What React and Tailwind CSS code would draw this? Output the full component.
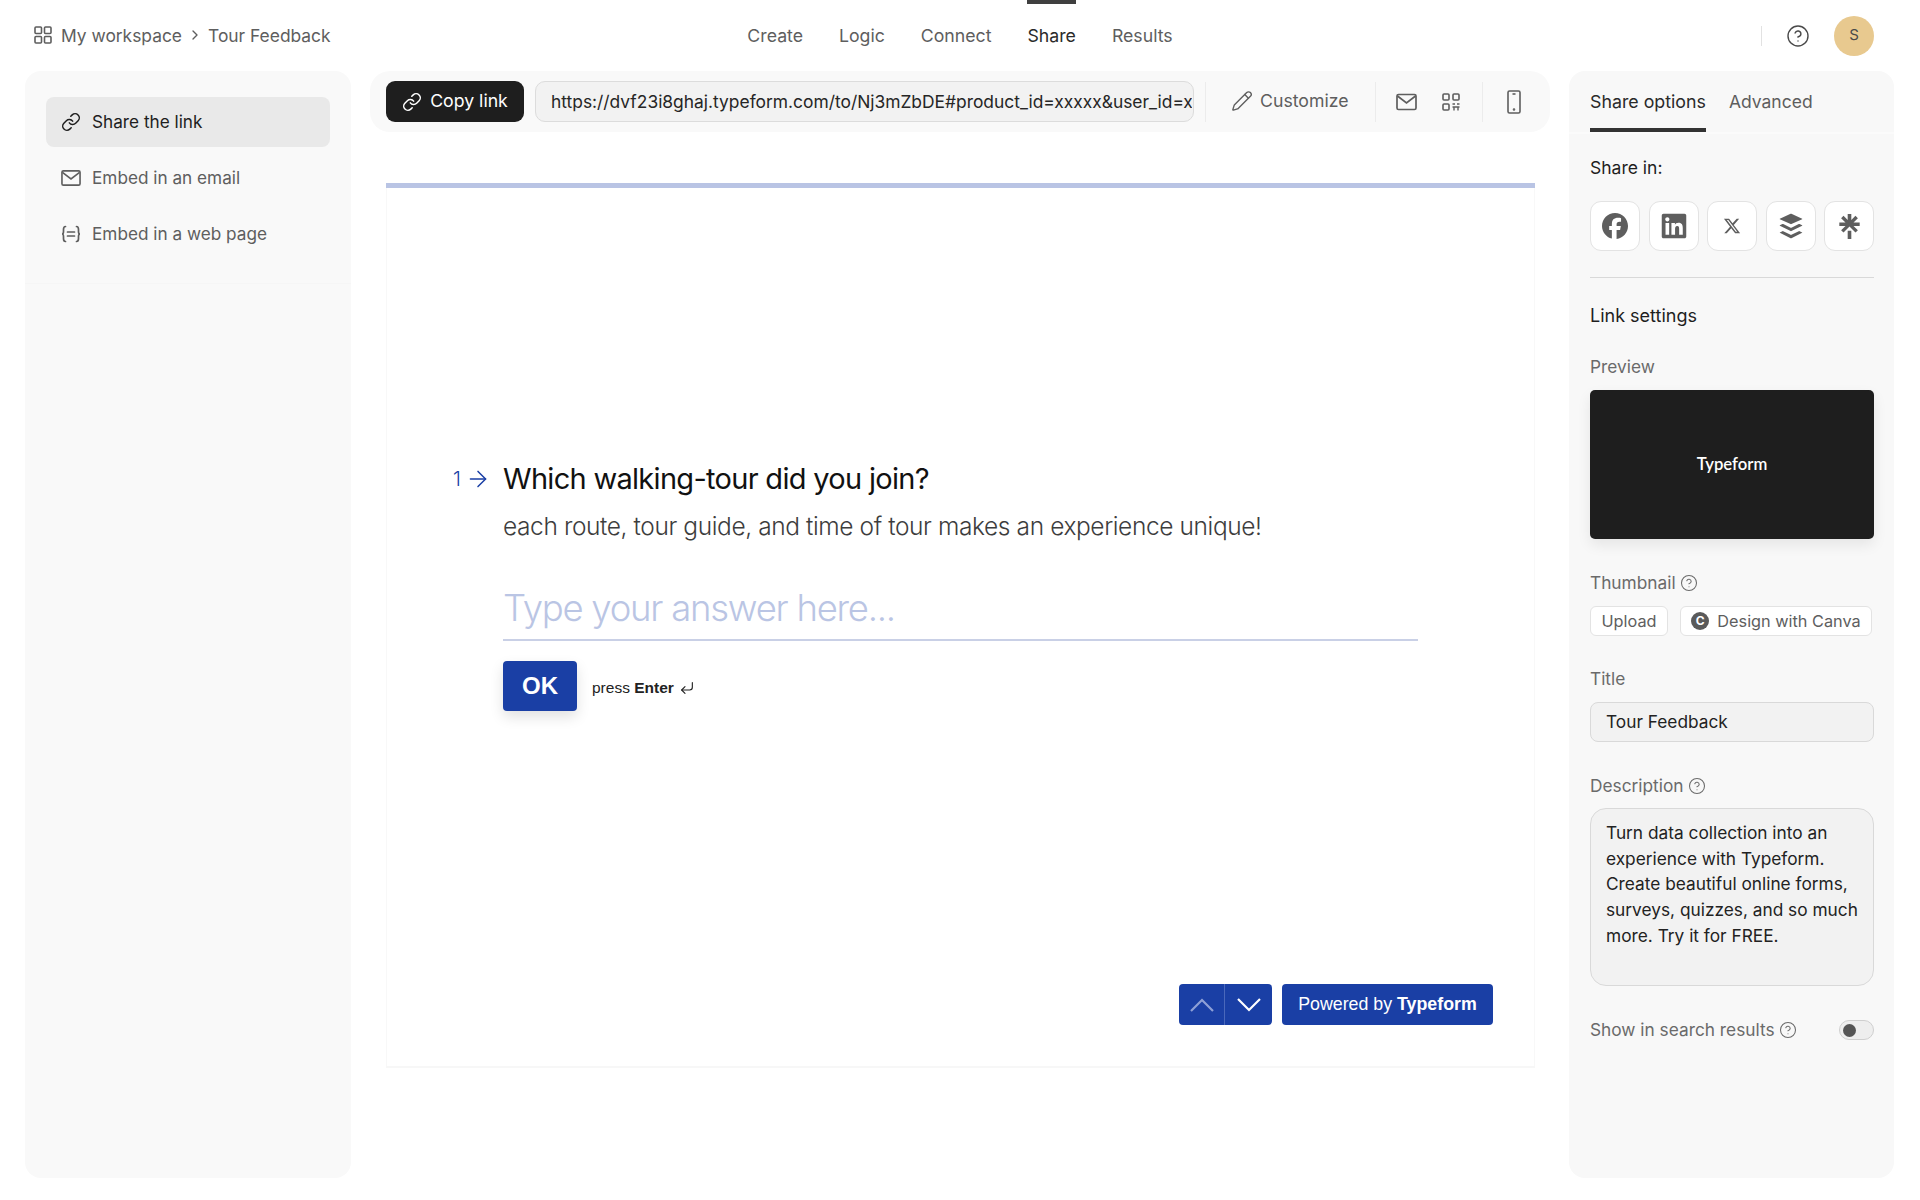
import { ChevronRight, CircleHelp, Link as LinkIcon, Pencil, ArrowRight, CornerDownLeft } from "lucide-react";
import { FaFacebook, FaLinkedin, FaXTwitter, FaBuffer } from "react-icons/fa6";
import { SiLinktree } from "react-icons/si";

const GridIcon = () => (
  <svg width="18" height="18" viewBox="0 0 18 18" fill="none" stroke="#5e5e5e" strokeWidth="1.6">
    <rect x="1" y="1" width="6.5" height="6.5" rx="1" />
    <rect x="10.5" y="1" width="6.5" height="6.5" rx="1" />
    <rect x="1" y="10.5" width="6.5" height="6.5" rx="1" />
    <rect x="10.5" y="10.5" width="6.5" height="6.5" rx="1" />
  </svg>
);

const MailIcon = () => (
  <svg width="21" height="18" viewBox="0 0 21 18" fill="none" stroke="#5e5e5e" strokeWidth="1.7">
    <rect x="1" y="1.5" width="19" height="15" rx="1.5" />
    <path d="M1.5 3l9 7 9-7" />
  </svg>
);

const EmbedIcon = () => (
  <svg width="20" height="18" viewBox="0 0 20 18" fill="none" stroke="#5e5e5e" strokeWidth="1.7" strokeLinecap="round">
    <path d="M4.500 1.500C2.500 1.500 2.500 3 2.500 4.500v2c0 1.500-.5 2.500-1.500 2.500 1 0 1.500 1 1.500 2.500v2c0 1.500 0 3 2 3" />
    <path d="M15.500 1.500c2 0 2 1.500 2 3v2c0 1.500.5 2.500 1.500 2.500-1 0-1.500 1-1.500 2.500v2c0 1.500 0 3-2 3" />
    <path d="M6.500 7h7M6.500 11h7" />
  </svg>
);

const QrIcon = () => (
  <svg width="18" height="18" viewBox="0 0 18 18" fill="none" stroke="#5e5e5e" strokeWidth="1.6">
    <rect x="1" y="1" width="6" height="6" rx="1" />
    <rect x="11" y="1" width="6" height="6" rx="1" />
    <rect x="1" y="11" width="6" height="6" rx="1" />
    <path d="M10.500 11h2.500M15 11h2.500M10.500 14h7M12 14v3.500M16 14.500v3" strokeWidth="1.400" />
  </svg>
);

const PhoneIcon = () => (
  <svg width="14" height="24" viewBox="0 0 14 24" fill="none" stroke="#5e5e5e" strokeWidth="1.6">
    <rect x="1" y="1" width="12" height="22" rx="1.500" />
    <path d="M5.500 4h3" />
    <circle cx="7" cy="19.500" r="0.500" fill="#5e5e5e" />
  </svg>
);

const Chevron = ({ up, className }) => (
  <svg width="24" height="14" viewBox="0 0 24 14" fill="none" stroke="currentColor" strokeWidth="2.200" className={className}>
    <path d={up ? "M1 13L12 2l11 11" : "M1 1l11 11L23 1"} />
  </svg>
);

const MenuItem = ({ icon, label, active }) => (
  <div className={`h-[50px] px-[15px] flex items-center gap-[11px] rounded-lg text-[17.200px] ${active ? "bg-[#e9e9e9] text-[#1e1e1e]" : "text-[#5e5e5e]"}`}>
    <span className="w-5 flex justify-center">{icon}</span>
    <span>{label}</span>
  </div>
);

const ShareButton = ({ children }) => (
  <div className="w-[50px] h-[50px] flex items-center justify-center bg-white border border-[#e3e3e3] rounded-[11px] text-[#5e5e5e]">
    {children}
  </div>
);

const FieldLabel = ({ children, help }) => (
  <div className="h-6 flex items-center gap-[4px] text-[17.300px] text-[#6a6a6a]">
    {children}
    {help && <CircleHelp size={18} strokeWidth={1.4} />}
  </div>
);

const VDivider = () => <div className="w-px h-[40px] bg-[#ececec]" />;

export default function App() {
  const tabs = ["Create", "Logic", "Connect", "Share", "Results"];

  return (
    <div className="w-[1920px] h-[1200px] bg-white overflow-hidden text-[#1e1e1e] [font-family:Inter,sans-serif]">
      {/* Top bar */}
      <header className="h-[71px] grid grid-cols-[1fr_auto_1fr] items-center px-[34px]">
        <div className="flex items-center text-[17.400px] text-[#5e5e5e]">
          <GridIcon />
          <span className="ml-[9px] pt-[2px]">My workspace</span>
          <ChevronRight size={16} className="mx-[5px]" />
          <span className="pt-[2px]">Tour Feedback</span>
        </div>
        <nav className="flex gap-9 h-full text-[17.700px] text-[#5e5e5e]">
          {tabs.map((t) => (
            <div key={t} className={`h-full flex items-center border-t-[4px] pb-[2px] ${t === "Share" ? "border-[#3f3f3f] text-[#2a2a2a]" : "border-transparent"}`}>
              {t}
            </div>
          ))}
        </nav>
        <div className="flex items-center justify-end pr-[12px]">
          <div className="w-px h-5 bg-[#e2e2e2]" />
          <CircleHelp size={24} strokeWidth={1.4} className="ml-[24px] text-[#4a4a4a]" />
          <div className="ml-[24px] w-10 h-10 rounded-full bg-[#e8c98f] flex items-center justify-center text-[15px] text-[#4a4a4a]">S</div>
        </div>
      </header>

      <div className="flex h-[1107px] pl-[25px]">
        {/* Left panel */}
        <aside className="w-[326px] h-full bg-[#f9f9f9] rounded-2xl">
          <div className="h-[213px] pt-[26px] px-[21px] flex flex-col gap-[6px] border-b border-[#f6f6f6]">
            <MenuItem active icon={<LinkIcon size={20} strokeWidth={1.8} />} label="Share the link" />
            <MenuItem icon={<MailIcon />} label="Embed in an email" />
            <MenuItem icon={<EmbedIcon />} label="Embed in a web page" />
          </div>
        </aside>

        {/* Center */}
        <main className="w-[1180px] ml-[19px]">
          <div className="h-[61px] bg-[#f9f9f9] rounded-[20px] flex items-center pl-4">
            <button className="w-[138px] h-[41px] bg-[#1e1e1e] text-white rounded-[9px] flex items-center justify-center gap-[8px] text-[17.700px]">
              <LinkIcon size={20} strokeWidth={1.8} />
              Copy link
            </button>
            <input
              readOnly
              value="https://dvf23i8ghaj.typeform.com/to/Nj3mZbDE#product_id=xxxxx&user_id=xxxxx"
              className="ml-[11px] w-[659px] h-[41px] bg-[#f2f2f2] border border-[#dcdcdc] rounded-[10px] pl-[15px] pr-px text-[17.400px] text-[#262626] outline-none"
            />
            <div className="ml-[11px]"><VDivider /></div>
            <div className="ml-[25px] flex items-center gap-[7px] text-[17.700px] text-[#5e5e5e]">
              <Pencil size={22} strokeWidth={1.5} />
              Customize
            </div>
            <div className="ml-[26px]"><VDivider /></div>
            <div className="ml-[20px]"><MailIcon /></div>
            <div className="ml-[25px]"><QrIcon /></div>
            <div className="ml-[22px]"><VDivider /></div>
            <div className="ml-[24px]"><PhoneIcon /></div>
          </div>

          {/* Form preview */}
          <div className="mt-[51px] ml-4 w-[1149px] h-[885px] bg-white border-x border-b-2 border-x-[#f8f8f8] border-b-[#f7f7f7] flex flex-col">
            <div className="h-[5px] -mx-px bg-[#b9c4e4]" />
            <div className="pt-[273px]">
              <div className="flex items-center h-[36px] pl-[66px]">
                <span className="w-[14px] text-[20px] text-[#1a3fa5] font-light">1</span>
                <ArrowRight size={26} strokeWidth={1.4} className="-ml-[2px] text-[#1a3fa5]" />
                <span className="ml-[12px] text-[29px] tracking-[-0.7px] text-[#111]">Which walking-tour did you join?</span>
              </div>
              <div className="ml-[116px] mt-[12px] text-[24.500px] tracking-[-0.4px] leading-[34px] font-light text-[#3d3d3d]">
                each route, tour guide, and time of tour makes an experience unique!
              </div>
              <div className="ml-[116px] mr-[116px] mt-[39px] h-[59px] border-b-2 border-[#c9d0e6] text-[36.500px] tracking-[-1.250px] leading-[52px] font-light text-[#bac5e4]">
                Type your answer here...
              </div>
              <div className="ml-[116px] mt-5 flex items-center">
                <div className="w-[74px] h-[50px] rounded-[4px] bg-[#1a3fa5] text-white flex items-center justify-center text-[24px] font-bold shadow-[0_6px_14px_rgba(0,0,0,0.12)] [font-family:'Liberation_Sans',sans-serif]">OK</div>
                <div className="ml-[15px] mt-[3px] flex items-center gap-[5px] text-[15.500px] text-[#222] [font-family:'Liberation_Sans',sans-serif]">
                  <span>press <b>Enter</b></span>
                  <CornerDownLeft size={16} strokeWidth={1.7} />
                </div>
              </div>
            </div>
            <div className="mt-auto mb-[41px] mr-[41px] flex justify-end gap-[10px] [font-family:'Liberation_Sans',sans-serif]">
              <div className="h-[41px] flex rounded-[4px] bg-[#1a3fa5] text-white overflow-hidden">
                <div className="w-[46px] flex items-center justify-center border-r border-[#4a68bb]"><Chevron up className="text-[#8ea0d6]" /></div>
                <div className="w-[47px] flex items-center justify-center"><Chevron /></div>
              </div>
              <div className="w-[211px] h-[41px] rounded-[4px] bg-[#1a3fa5] text-white flex items-center justify-center text-[17.800px]">
                <span>Powered by <b>Typeform</b></span>
              </div>
            </div>
          </div>
        </main>

        {/* Right panel */}
        <aside className="w-[325px] ml-[19px] h-full bg-[#f8f8f8] rounded-2xl">
          <div className="h-[63px] px-[21px] flex gap-[23px] border-b-2 border-[#fbfbfb] text-[17.800px]">
            <div className="h-[61px] flex items-center border-b-4 border-[#333] pt-[5px] text-[#2a2a2a]">Share options</div>
            <div className="h-[61px] flex items-center pt-[1px] text-[17.500px] text-[#5e5e5e]">Advanced</div>
          </div>
          <div className="pl-[21px] pr-[20px]">
            <div className="mt-[23px] text-[17.500px] leading-[22px]">Share in:</div>
            <div className="mt-[22px] flex justify-between">
              <ShareButton><FaFacebook size={26} /></ShareButton>
              <ShareButton><FaLinkedin size={28} /></ShareButton>
              <ShareButton><FaXTwitter size={18} /></ShareButton>
              <ShareButton><FaBuffer size={28} /></ShareButton>
              <ShareButton><SiLinktree size={25} /></ShareButton>
            </div>
            <div className="mt-[26px] h-px bg-[#d9d9d9]" />
            <div className="mt-[27px] text-[18px] leading-[22px]">Link settings</div>
            <div className="mt-[28px]"><FieldLabel>Preview</FieldLabel></div>
            <div className="mt-[11px] h-[149px] bg-[#1e1e1e] rounded-[5px] flex items-center justify-center text-white text-[16.700px] font-semibold shadow-[0_6px_14px_rgba(0,0,0,0.08)] [font-family:Lato,sans-serif]">Typeform</div>
            <div className="mt-[32px]"><FieldLabel help>Thumbnail</FieldLabel></div>
            <div className="mt-[11px] flex gap-3 text-[16.300px] text-[#5e5e5e]">
              <div className="w-[78px] h-[30px] bg-white border border-[#e3e3e3] rounded-md flex items-center justify-center">Upload</div>
              <div className="w-[192px] h-[30px] bg-white border border-[#e3e3e3] rounded-md flex items-center justify-center gap-2">
                <span className="w-[18px] h-[18px] rounded-full bg-[#5a5a5a] text-white text-[12px] font-bold flex items-center justify-center">C</span>
                Design with Canva
              </div>
            </div>
            <div className="mt-[31px]"><FieldLabel>Title</FieldLabel></div>
            <div className="mt-[11px] h-[40px] bg-[#f2f2f2] border border-[#d9d9d9] rounded-lg flex items-center px-[15px] text-[17.300px] text-[#222]">Tour Feedback</div>
            <div className="mt-[32px]"><FieldLabel help>Description</FieldLabel></div>
            <div className="mt-[10px] h-[178px] bg-[#f2f2f2] border border-[#d9d9d9] rounded-2xl pl-[15px] pr-[8px] pt-[11px] text-[17.300px] leading-[25.700px] text-[#222]">
              Turn data collection into an experience with Typeform. Create beautiful online forms, surveys, quizzes, and so much more. Try it for FREE.
            </div>
            <div className="mt-[32px] flex items-center justify-between">
              <FieldLabel help>Show in search results</FieldLabel>
              <div className="w-[35px] h-5 rounded-full bg-[#eeeeee] border border-[#cfcfcf] flex items-center pl-[3px]">
                <div className="w-[13px] h-[13px] rounded-full bg-[#555]" />
              </div>
            </div>
          </div>
        </aside>
      </div>
    </div>
  );
}
